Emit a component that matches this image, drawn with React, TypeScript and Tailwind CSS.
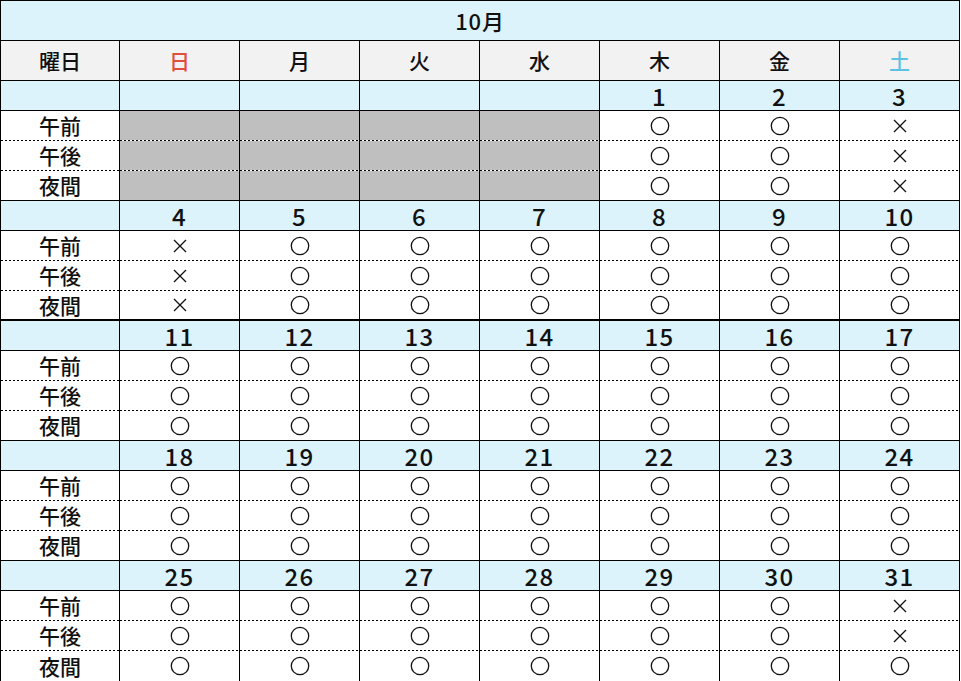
import React from "react";

type Slot = "o" | "x" | "g";

interface Week {
  dates: (number | null)[];
  slots: Slot[][]; // per day: [午前, 午後, 夜間]
}

const O: Slot[] = ["o", "o", "o"];
const X: Slot[] = ["x", "x", "x"];
const G: Slot[] = ["g", "g", "g"];

const weeks: Week[] = [
  { dates: [null, null, null, null, 1, 2, 3], slots: [G, G, G, G, O, O, X] },
  { dates: [4, 5, 6, 7, 8, 9, 10], slots: [X, O, O, O, O, O, O] },
  { dates: [11, 12, 13, 14, 15, 16, 17], slots: [O, O, O, O, O, O, O] },
  { dates: [18, 19, 20, 21, 22, 23, 24], slots: [O, O, O, O, O, O, O] },
  { dates: [25, 26, 27, 28, 29, 30, 31], slots: [O, O, O, O, O, O, ["x", "x", "o"]] },
];

const labels = ["午前", "午後", "夜間"];
const days = ["日", "月", "火", "水", "木", "金", "土"];

const font = "font-['Noto_Sans_CJK_JP','Noto_Sans',sans-serif]";

function Mark({ s }: { s: Slot }) {
  if (s === "g") return null;
  if (s === "o")
    return (
      <svg width="20" height="20" viewBox="0 0 20 20" className="block">
        <circle cx="10" cy="10" r="8.7" fill="none" stroke="#111" strokeWidth="1.3" />
      </svg>
    );
  return (
    <svg width="16" height="16" viewBox="0 0 16 16" className="block">
      <path d="M2 2 L14 14 M14 2 L2 14" stroke="#111" strokeWidth="1.3" fill="none" />
    </svg>
  );
}

function WeekBlock({ week, thickBottom, last }: { week: Week; thickBottom: boolean; last: boolean }) {
  return (
    <>
      {/* date row */}
      <div className="flex h-[30px] border-b border-black bg-[#ddf3fc]">
        <div className="w-[120px] border-l border-r border-black" />
        {week.dates.map((d, i) => (
          <div
            key={i}
            className="w-[120px] border-r border-black flex items-center justify-center text-[24px] leading-none font-medium text-[#111] tracking-[0.06em]"
          >
            {d ?? ""}
          </div>
        ))}
      </div>
      {labels.map((label, r) => {
        const isLast = r === 2;
        const rowBorder = isLast
          ? last
            ? "h-[30px]"
            : thickBottom
            ? "h-[30px] border-b-2 border-black"
            : "h-[30px] border-b border-black"
          : "h-[29px]";
        return (
          <React.Fragment key={r}>
            <div className={`flex ${rowBorder}`}>
              <div className="w-[120px] border-l border-r border-black bg-white flex items-center justify-center text-[21px] leading-none font-medium text-[#111]">
                {label}
              </div>
              {week.slots.map((s, i) => (
                <div
                  key={i}
                  className={`w-[120px] border-r border-black flex items-center justify-center ${
                    s[r] === "g" ? "bg-[#bfbfbf]" : "bg-white"
                  }`}
                >
                  <Mark s={s[r]} />
                </div>
              ))}
            </div>
            {!isLast && (
              <div className="flex h-[1px]">
                {Array.from({ length: 8 }).map((_, i) => (
                  <div
                    key={i}
                    className={`w-[120px] h-[1px] border-r border-black ${i === 0 ? "border-l" : ""} bg-[repeating-linear-gradient(to_right,#000_0px,#000_2px,transparent_2px,transparent_4px)]`}
                  />
                ))}
              </div>
            )}
          </React.Fragment>
        );
      })}
    </>
  );
}

export default function App() {
  return (
    <div className={`w-[961px] h-[681px] bg-white ${font}`}>
      <div className="w-[960px]">
        {/* title */}
        <div className="h-[41px] border border-black bg-[#ddf3fc] flex items-center justify-center text-[22px] font-medium text-[#111] tracking-[0.04em]">
          10月
        </div>
        {/* header */}
        <div className="flex h-[40px] border-b border-black bg-[#f2f2f2]">
          <div className="w-[120px] border-l border-r border-black flex items-center justify-center text-[21px] font-medium text-[#111]">
            曜日
          </div>
          {days.map((d, i) => (
            <div
              key={d}
              className={`w-[120px] border-r border-black flex items-center justify-center text-[21px] font-medium ${
                i === 0 ? "text-[#e04e3c]" : i === 6 ? "text-[#5ec0e3]" : "text-[#111]"
              }`}
            >
              {d}
            </div>
          ))}
        </div>
        {weeks.map((w, i) => (
          <WeekBlock key={i} week={w} thickBottom={i === 1} last={i === weeks.length - 1} />
        ))}
      </div>
    </div>
  );
}
